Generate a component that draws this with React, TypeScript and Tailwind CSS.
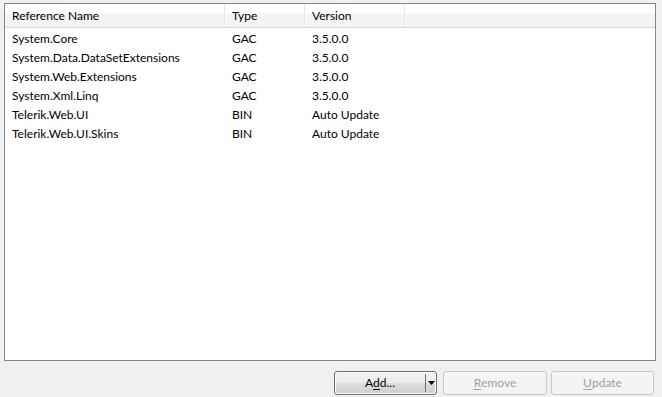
import * as React from 'react'

type Ref = { name: string; type: string; version: string }

const refs: Ref[] = [
  { name: 'System.Core', type: 'GAC', version: '3.5.0.0' },
  { name: 'System.Data.DataSetExtensions', type: 'GAC', version: '3.5.0.0' },
  { name: 'System.Web.Extensions', type: 'GAC', version: '3.5.0.0' },
  { name: 'System.Xml.Linq', type: 'GAC', version: '3.5.0.0' },
  { name: 'Telerik.Web.UI', type: 'BIN', version: 'Auto Update' },
  { name: 'Telerik.Web.UI.Skins', type: 'BIN', version: 'Auto Update' },
]

function HeaderCell({ width, children }: { width: string; children?: React.ReactNode }) {
  return (
    <div
      className={`${width} flex h-full items-center border-r border-[#e3e5e8] pl-[7px] shadow-[1px_0_0_#ffffff]`}
    >
      {children}
    </div>
  )
}

function DisabledButton({ mnemonic, rest, className }: { mnemonic: string; rest: string; className?: string }) {
  return (
    <button
      disabled
      className={`flex h-[24px] items-center justify-center rounded-[3px] border border-[#c5c9cc] bg-[#f4f4f4] text-[#a0a0a0] ${className ?? ''}`}
    >
      <span className="underline underline-offset-2">{mnemonic}</span>
      {rest}
    </button>
  )
}

export default function App() {
  return (
    <div
      className="h-[397px] w-[662px] bg-[#f0f0f0] px-[4px] pt-[3px] text-[12px] text-black"
      style={{ fontFamily: 'Lato, "Noto Sans", sans-serif' }}
    >
      <div className="h-[358px] w-[652px] border border-[#828790] bg-white">
        <div className="flex h-[24px] border-b border-[#d5d5d5] bg-[linear-gradient(#ffffff_0%,#ffffff_40%,#f3f4f6_42%,#f3f4f6_100%)]">
          <HeaderCell width="w-[220px]">Reference Name</HeaderCell>
          <HeaderCell width="w-[80px]">Type</HeaderCell>
          <HeaderCell width="w-[100px]">Version</HeaderCell>
          <div className="flex-1" />
        </div>
        <div className="pt-[1px]">
          {refs.map((r) => (
            <div key={r.name} className="flex h-[19px] items-center">
              <div className="w-[220px] pl-[7px]">{r.name}</div>
              <div className="w-[80px] pl-[7px]">{r.type}</div>
              <div className="w-[100px] pl-[7px]">{r.version}</div>
            </div>
          ))}
        </div>
      </div>

      <div className="mt-[10px] flex justify-end pr-[4px]">
        <div className="flex h-[24px] w-[103px] overflow-hidden rounded-[3px] border border-[#707070] bg-[linear-gradient(#f2f2f2_0%,#ebebeb_48%,#dddddd_52%,#cfcfcf_100%)] shadow-[inset_0_0_0_1px_#fcfcfc]">
          <div className="flex flex-1 items-center justify-center">
            A<span className="underline underline-offset-2">d</span>d...
          </div>
          <div className="my-[2px] w-px bg-[#707070]" />
          <div className="flex w-[10px] items-center justify-center">
            <svg width="7" height="4" viewBox="0 0 7 4">
              <path d="M0 0h7L3.5 4z" fill="#000" />
            </svg>
          </div>
        </div>
        <DisabledButton mnemonic="R" rest="emove" className="ml-[6px] w-[104px]" />
        <DisabledButton mnemonic="U" rest="pdate" className="ml-[4px] w-[103px]" />
      </div>
    </div>
  )
}
